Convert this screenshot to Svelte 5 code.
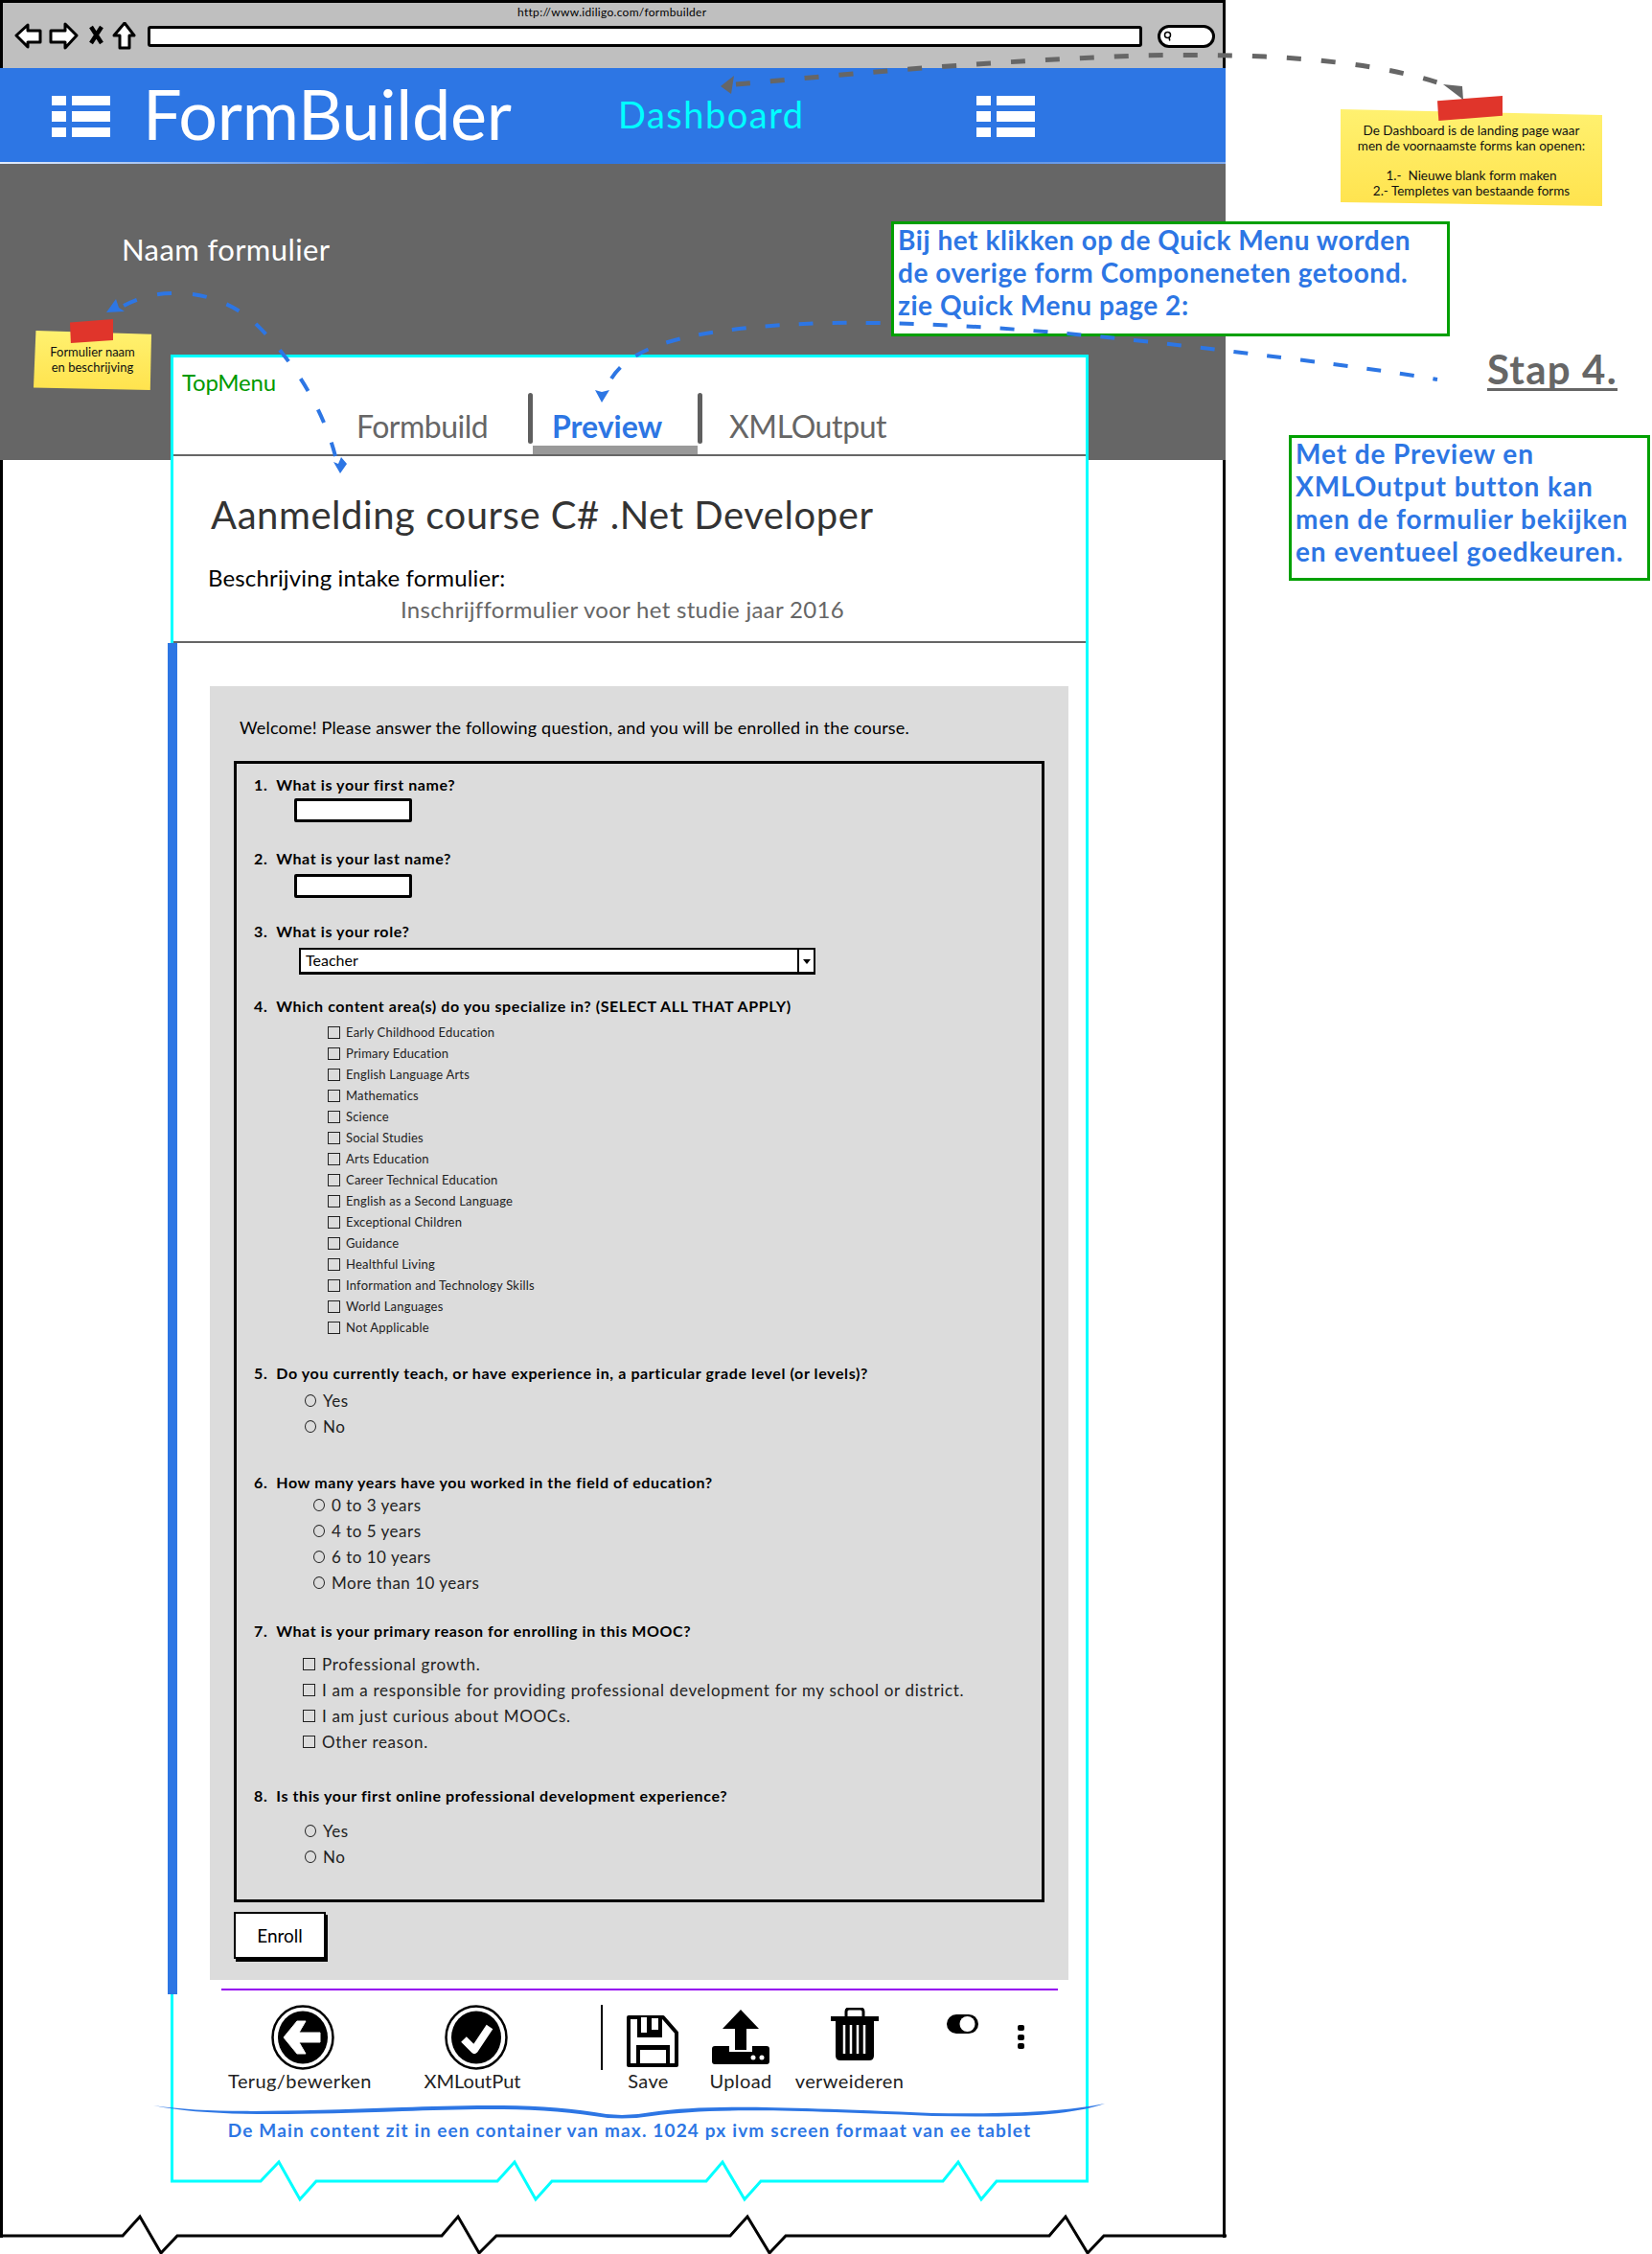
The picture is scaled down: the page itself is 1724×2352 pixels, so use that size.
<script>
  const areas = ['Early Childhood Education', 'Primary Education', 'English Language Arts', 'Mathematics', 'Science', 'Social Studies', 'Arts Education', 'Career Technical Education', 'English as a Second Language', 'Exceptional Children', 'Guidance', 'Healthful Living', 'Information and Technology Skills', 'World Languages', 'Not Applicable'];
  const yesNo = ['Yes', 'No'];
  const years = ['0 to 3 years', '4 to 5 years', '6 to 10 years', 'More than 10 years'];
  const reasons = ['Professional growth.', 'I am a responsible for providing professional development for my school or district.', 'I am just curious about MOOCs.', 'Other reason.'];
</script>

{#snippet listIcon()}
  <svg class="list-icon" viewBox="0 0 61 43" aria-hidden="true">
    <path d="M0 0h15v10H0zM21 0h40v10H21zM0 16h15v11H0zM21 16h40v11H21zM0 33h15v10H0zM21 33h40v10H21z" fill="#fff" />
  </svg>
{/snippet}

<div class="page">
  <div class="browser">
    <div class="toolbar">
      <div class="url">http://www.idiligo.com/formbuilder</div>
      <div class="navrow">
        <svg class="nav" viewBox="0 0 130 30" aria-hidden="true">
          <path d="M2 14 L14 3 V9 H27 V21 H14 V26 Z" fill="#fff" stroke="#000" stroke-width="3" stroke-linejoin="round" />
          <path d="M65 14 L53 2 V9 H38 V21 H53 V27 Z" fill="#fff" stroke="#000" stroke-width="3" stroke-linejoin="round" />
          <path d="M80 5 L91 22 M91 5 L80 22" stroke="#000" stroke-width="4.5" fill="none" />
          <path d="M115 1 L125 14 H120 V27 H110 V14 H104 Z" fill="#fff" stroke="#000" stroke-width="3" stroke-linejoin="round" />
        </svg>
        <div class="address"></div>
        <div class="search">
          <svg viewBox="0 0 12 16" aria-hidden="true"><circle cx="6" cy="6" r="4" fill="none" stroke="#000" stroke-width="2" /><path d="M8 9 L9 14" stroke="#000" stroke-width="2" /></svg>
        </div>
      </div>
    </div>

    <header class="topbar">
      {@render listIcon()}
      <div class="brand">FormBuilder</div>
      <div class="dash">Dashboard</div>
      {@render listIcon()}
    </header>

    <div class="banner">
      <div class="form-name">Naam formulier</div>
    </div>

    <div class="viewport">
      <main class="sheet">
        <section class="menu">
          <div class="topmenu">TopMenu</div>
          <div class="tabs">
            <div class="tab first">Formbuild</div>
            <div class="tab-div"></div>
            <div class="tab active">Preview</div>
            <div class="tab-div"></div>
            <div class="tab last">XMLOutput</div>
          </div>
        </section>

        <section class="intro">
          <h1>Aanmelding course C# .Net Developer</h1>
          <p class="desc">Beschrijving intake formulier:</p>
          <p class="sub">Inschrijfformulier voor het studie jaar 2016</p>
        </section>

        <section class="form-section">
          <div class="panel">
            <p class="welcome">Welcome! Please answer the following question, and you will be enrolled in the course.</p>
            <div class="form-box">
              <div class="q q1">1.&nbsp; What is your first name?</div>
              <div class="input i1"></div>
              <div class="q q2">2.&nbsp; What is your last name?</div>
              <div class="input i2"></div>
              <div class="q q3">3.&nbsp; What is your role?</div>
              <div class="select">
                <span class="sel-text">Teacher</span>
                <span class="sel-btn"></span>
              </div>
              <div class="q q4">4.&nbsp; Which content area(s) do you specialize in? (SELECT ALL THAT APPLY)</div>
              <ul class="areas">
                {#each areas as a}
                  <li><span class="box"></span>{a}</li>
                {/each}
              </ul>
              <div class="q q5">5.&nbsp; Do you currently teach, or have experience in, a particular grade level (or levels)?</div>
              <ul class="opts yes1">
                {#each yesNo as o}
                  <li><span class="radio"></span>{o}</li>
                {/each}
              </ul>
              <div class="q q6">6.&nbsp; How many years have you worked in the field of education?</div>
              <ul class="opts yrs">
                {#each years as o}
                  <li><span class="radio"></span>{o}</li>
                {/each}
              </ul>
              <div class="q q7">7.&nbsp; What is your primary reason for enrolling in this MOOC?</div>
              <ul class="opts why">
                {#each reasons as o}
                  <li><span class="box big"></span>{o}</li>
                {/each}
              </ul>
              <div class="q q8">8.&nbsp; Is this your first online professional development experience?</div>
              <ul class="opts yes2">
                {#each yesNo as o}
                  <li><span class="radio"></span>{o}</li>
                {/each}
              </ul>
            </div>
            <button class="enroll">Enroll</button>
          </div>
          <div class="purple"></div>
        </section>

        <section class="actions">
          <div class="act back">
            <svg class="round" viewBox="0 0 66 68" aria-hidden="true">
              <ellipse cx="33" cy="34" rx="31.5" ry="32.5" fill="#fff" stroke="#000" stroke-width="2.5" />
              <ellipse cx="33" cy="34" rx="26" ry="27.5" fill="#000" />
              <path d="M13 34 L27 17 H36 L29 29 H51 V39 H29 L36 51 H27 Z" fill="#fff" stroke="#fff" stroke-linejoin="round" />
            </svg>
            <span>Terug/bewerken</span>
          </div>
          <div class="act xml">
            <svg class="round" viewBox="0 0 66 68" aria-hidden="true">
              <ellipse cx="33" cy="34" rx="31.5" ry="32.5" fill="#fff" stroke="#000" stroke-width="2.5" />
              <ellipse cx="33" cy="34" rx="26" ry="27.5" fill="#000" />
              <path d="M20 36 L31 47 L47 23" fill="none" stroke="#fff" stroke-width="8" stroke-linejoin="round" />
            </svg>
            <span>XMLoutPut</span>
          </div>
          <div class="vline"></div>
          <div class="act save">
            <svg viewBox="0 0 54 54" aria-hidden="true">
              <path d="M2 2 H38 L52 18 V52 H2 Z" fill="#fff" stroke="#000" stroke-width="4" stroke-linejoin="round" />
              <path d="M11 2 H37 V23 H11 Z" fill="#000" />
              <path d="M15 2 H21 V18 H15 Z M26 3 H33 V15 H26 Z" fill="#fff" />
              <path d="M10 31 H45 V52 H10 Z" fill="#000" />
              <path d="M14 36 H41 V50 H14 Z" fill="#fff" />
            </svg>
            <span>Save</span>
          </div>
          <div class="act upload">
            <svg viewBox="0 0 60 58" aria-hidden="true">
              <path d="M30 1 L49 21 H36 V43 H24 V21 H11 Z" fill="#000" />
              <path d="M3 39 H18 V45 H42 V39 H57 Q60 39 60 42 V55 Q60 58 57 58 H3 Q0 58 0 55 V42 Q0 39 3 39 Z" fill="#000" />
              <circle cx="43" cy="51" r="2.5" fill="#fff" />
              <circle cx="52" cy="51" r="2.5" fill="#fff" />
            </svg>
            <span>Upload</span>
          </div>
          <div class="act trash">
            <svg viewBox="0 0 50 56" aria-hidden="true">
              <path d="M16 9 V4 Q16 1 19 1 H31 Q34 1 34 4 V9" fill="none" stroke="#000" stroke-width="3" />
              <path d="M0 9 H50 V14 H0 Z" fill="#000" />
              <path d="M5 14 H45 V50 Q45 55 40 55 H10 Q5 55 5 50 Z" fill="#000" />
              <path d="M14 18 V48 M21 18 V48 M28 18 V48 M35 18 V48" stroke="#fff" stroke-width="2.5" />
            </svg>
            <span>verweideren</span>
          </div>
          <svg class="toggle" viewBox="0 0 33 20" aria-hidden="true">
            <rect width="33" height="20" rx="10" fill="#000" />
            <circle cx="21.5" cy="10" r="8" fill="#fff" />
          </svg>
          <svg class="dots" viewBox="0 0 7 25" aria-hidden="true">
            <rect width="7" height="6" rx="2" fill="#000" />
            <rect y="10" width="7" height="6" rx="2" fill="#000" />
            <rect y="19" width="7" height="6" rx="2" fill="#000" />
          </svg>
        </section>

        <p class="main-note">De Main content zit in een container van max. 1024 px ivm screen formaat van ee tablet</p>
      </main>
    </div>
  </div>

  <aside class="note note-left">
    <div class="paper"><p>Formulier naam</p><p>en beschrijving</p></div>
    <div class="tape"></div>
  </aside>
  <aside class="note note-right">
    <div class="paper">
      <p>De Dashboard is de landing page waar</p>
      <p>men de voornaamste forms kan openen:</p>
      <p class="gap">1.- &nbsp;Nieuwe blank form maken</p>
      <p>2.- Templetes van bestaande forms</p>
    </div>
    <div class="tape"></div>
  </aside>

  <aside class="callout one">
    <p>Bij het klikken op de Quick Menu worden</p>
    <p>de overige form Componeneten getoond.</p>
    <p>zie Quick Menu page 2:</p>
  </aside>
  <div class="stap">Stap 4.</div>
  <aside class="callout two">
    <p>Met de Preview en</p>
    <p>XMLOutput button kan</p>
    <p>men de formulier bekijken</p>
    <p>en eventueel goedkeuren.</p>
  </aside>

  <svg class="overlay" viewBox="0 0 1724 2352" aria-hidden="true">
    <!-- torn edges -->
    <path d="M178 2276 H272 L291 2256 L313 2295 L330 2276 H519 L537 2256 L559 2295 L576 2276 H737 L754 2256 L777 2295 L794 2276 H984 L1000 2256 L1024 2295 L1040 2276 H1136" fill="none" stroke="#00ffff" stroke-width="3" />
    <path d="M0 2333 H128 L146 2313 L168 2351 L185 2333 H461 L478 2313 L500 2351 L518 2333 H762 L780 2313 L803 2351 L820 2333 H1095 L1112 2313 L1135 2351 L1152 2333 H1280" fill="none" stroke="#000" stroke-width="3" />

    <!-- blue swoosh under actions -->
    <path d="M160 2197 C220 2206 300 2203 420 2199 C480 2197 560 2194 620 2204 Q648 2210 680 2204 C740 2196 800 2198 973 2205 C1050 2206 1110 2204 1153 2195 C1110 2210 1040 2209 973 2208 C800 2201 740 2200 680 2208 Q648 2213 620 2208 C560 2198 480 2201 420 2203 C300 2207 220 2209 160 2197 Z" fill="#2d76e4" />

    <!-- grey arrow to dashboard note -->
    <path d="M768 88 C860 80 1000 65 1190 58 C1290 56 1410 58 1500 86" fill="none" stroke="#666" stroke-width="5" stroke-dasharray="15 21" />
    <path d="M752 90 L766 79 L763 98 Z" fill="#666" />
    <path d="M1506 88 L1526 90 L1527 104 Z" fill="#666" />

    <!-- blue arrow form name -->
    <path d="M350 476 C338 430 310 380 266 337 C240 314 210 305 180 306 C160 306 140 312 124 322" fill="none" stroke="#2d76e4" stroke-width="4" stroke-dasharray="15 22" />
    <path d="M111 326 L121 312 L124 321 L130 325 Z" fill="#2d76e4" />
    <path d="M355 494 L348 482 L353 484 L356 477 L362 484 Z" fill="#2d76e4" />

    <!-- blue arrow quick menu -->
    <path d="M638 395 C660 360 720 342 860 337 C1000 335 1150 350 1279 366 C1360 376 1430 384 1500 396" fill="none" stroke="#2d76e4" stroke-width="4" stroke-dasharray="15 20" />
    <path d="M628 420 L621 407 L628 409 L636 407 Z" fill="#2d76e4" />
  </svg>
</div>

<style>
  :global(body) {
    margin: 0;
    background: #fff;
    font-family: Lato, "Noto Sans", sans-serif;
    color: #000;
  }
  p, h1, ul {
    margin: 0;
    padding: 0;
  }
  ul {
    list-style: none;
  }
  .page {
    position: relative;
    width: 1724px;
    height: 2352px;
    overflow: hidden;
    background: #fff;
  }
  .browser {
    width: 1279px;
  }

  .toolbar {
    box-sizing: border-box;
    height: 71px;
    background: #bfbfbf;
    border: 3px solid #000;
    border-bottom: 0;
  }
  .url {
    padding: 2px 0 0 537px;
    height: 16px;
    font-size: 12px;
    line-height: 16px;
    letter-spacing: 0.3px;
  }
  .navrow {
    display: flex;
    align-items: center;
    margin-top: 2px;
  }
  .nav {
    width: 130px;
    height: 30px;
    margin-left: 12px;
  }
  .address {
    box-sizing: border-box;
    width: 1038px;
    height: 22px;
    margin-left: 9px;
    background: #fff;
    border: 3px solid #000;
    border-radius: 3px;
  }
  .search {
    box-sizing: border-box;
    width: 60px;
    height: 24px;
    margin-left: 16px;
    padding-left: 3px;
    background: #fff;
    border: 3px solid #000;
    border-radius: 12px;
    line-height: 0;
  }
  .search svg {
    width: 9px;
    height: 14px;
    margin-top: 2px;
  }

  .topbar {
    display: flex;
    align-items: center;
    box-sizing: border-box;
    height: 100px;
    padding-left: 54px;
    background: #2d76e4;
    border-bottom: 2px solid;
    border-image: linear-gradient(90deg, #e4ecfa, #7fa9ec 20%, #2d76e4 35%, #2d76e4 50%, #7fa9ec 100%) 1;
  }
  .list-icon {
    flex: none;
    width: 61px;
    height: 43px;
    margin-top: 2px;
  }
  .brand {
    flex: none;
    width: 496px;
    margin: -5px 0 0 34px;
    color: #fff;
    font-size: 72px;
    line-height: 80px;
    letter-spacing: -0.3px;
  }
  .dash {
    flex: none;
    width: 374px;
    margin-top: -2px;
    color: #00ffff;
    font-size: 38px;
    line-height: 44px;
    letter-spacing: 1.5px;
  }

  .banner {
    box-sizing: border-box;
    height: 309px;
    padding: 69px 0 0 127px;
    background: #666;
  }
  .form-name {
    color: #fff;
    font-size: 31px;
    line-height: 40px;
    letter-spacing: 0.4px;
  }

  .viewport {
    display: flow-root;
    box-sizing: border-box;
    height: 1855px;
    border-left: 3px solid #000;
    border-right: 3px solid #000;
  }
  .sheet {
    box-sizing: border-box;
    width: 958px;
    height: 1906px;
    margin: -110px 0 0 175px;
    background: #fff;
    border: 3px solid #00ffff;
    border-bottom: 0;
  }

  .menu {
    box-sizing: border-box;
    height: 103px;
    padding-top: 11px;
    border-bottom: 2px solid #666;
  }
  .topmenu {
    padding-left: 9px;
    color: #009900;
    font-size: 24px;
    line-height: 30px;
    letter-spacing: -0.2px;
  }
  .tabs {
    display: flex;
    margin-top: -4px;
  }
  .tab {
    box-sizing: border-box;
    height: 64px;
    padding-top: 15px;
    color: #666;
    font-size: 32px;
    line-height: 40px;
  }
  .tab.first {
    width: 179px;
    margin-left: 191px;
    letter-spacing: -0.5px;
  }
  .tab.active {
    width: 172px;
    padding-left: 20px;
    color: #2d76e4;
    font-weight: 700;
    border-bottom: 9px solid #999;
  }
  .tab.last {
    margin-left: 28px;
    letter-spacing: -0.4px;
  }
  .tab-div {
    flex: none;
    width: 5px;
    height: 53px;
    background: #5f5f5f;
    border-radius: 3px;
  }

  .intro {
    box-sizing: border-box;
    height: 195px;
    padding-top: 36px;
    border-bottom: 2px solid #666;
  }
  h1 {
    margin-left: 39px;
    color: #333;
    font-size: 40px;
    font-weight: 400;
    line-height: 50px;
    letter-spacing: 0.55px;
  }
  .desc {
    margin: 26px 0 0 36px;
    font-size: 24px;
    line-height: 30px;
    letter-spacing: 0.15px;
  }
  .sub {
    margin: 3px 0 0 237px;
    color: #666;
    font-size: 24px;
    line-height: 30px;
    letter-spacing: 0.3px;
  }

  .form-section {
    box-sizing: border-box;
    height: 1410px;
    margin-left: -6px;
    padding-top: 45px;
    border-left: 10px solid #2d76e4;
  }
  .panel {
    box-sizing: border-box;
    width: 896px;
    height: 1350px;
    margin-left: 34px;
    padding-top: 32px;
    background: #dcdcdc;
  }
  .welcome {
    padding-left: 31px;
    font-size: 18px;
    line-height: 22px;
    letter-spacing: 0.19px;
  }
  .form-box {
    box-sizing: border-box;
    width: 846px;
    height: 1191px;
    margin: 24px 0 0 25px;
    padding: 10px 0 0 18px;
    border: 3px solid #000;
  }
  .q {
    font-size: 16px;
    font-weight: 700;
    line-height: 24px;
    letter-spacing: 0.6px;
  }
  .q2 { margin-top: 26px; }
  .q3 { margin-top: 23px; }
  .q4 { margin-top: 21px; }
  .q5 { margin-top: 25px; }
  .q6 { margin-top: 33px; }
  .q7 { margin-top: 25px; }
  .q8 { margin-top: 31px; }
  .input {
    box-sizing: border-box;
    width: 123px;
    height: 25px;
    margin-left: 42px;
    background: #fff;
    border: 3px solid #000;
    border-radius: 2px;
  }
  .i1 { margin-top: 2px; }
  .i2 { margin-top: 4px; }
  .select {
    display: flex;
    box-sizing: border-box;
    width: 539px;
    height: 28px;
    margin: 5px 0 0 47px;
    background: #fff;
    border: 2px solid #000;
    border-bottom-width: 3px;
  }
  .sel-text {
    flex: 1;
    padding-left: 5px;
    font-size: 16px;
    line-height: 22px;
  }
  .sel-btn {
    position: relative;
    width: 15px;
    border-left: 2px solid #000;
  }
  .sel-btn::after {
    content: "";
    position: absolute;
    left: 4px;
    top: 10px;
    border: 4px solid transparent;
    border-top: 5px solid #000;
    border-bottom: 0;
  }
  .areas {
    margin: 4px 0 0 77px;
  }
  .areas li {
    display: flex;
    align-items: center;
    height: 22px;
    color: #222;
    font-size: 13px;
    letter-spacing: 0.2px;
  }
  .box {
    flex: none;
    box-sizing: border-box;
    width: 13px;
    height: 13px;
    margin-right: 6px;
    border: 1.5px solid #222;
  }
  .box.big {
    margin-right: 7px;
  }
  .opts li {
    display: flex;
    align-items: center;
    height: 27px;
    color: #222;
    font-size: 17px;
    letter-spacing: 0.5px;
  }
  .radio {
    flex: none;
    box-sizing: border-box;
    width: 12px;
    height: 13px;
    margin-right: 7px;
    border: 1.5px solid #222;
    border-radius: 50%;
  }
  .yes1 { margin: 3px 0 0 53px; }
  .yrs { margin: -2px 0 0 62px; }
  .why { margin: 9px 0 0 51px; }
  .why li { letter-spacing: 0.68px; }
  .yes2 { margin: 11px 0 0 53px; }

  .enroll {
    display: block;
    box-sizing: border-box;
    width: 96px;
    height: 49px;
    margin: 10px 0 0 25px;
    padding: 0;
    background: #fff;
    border: 2px solid #000;
    box-shadow: 2px 3px 0 #000;
    color: #000;
    font-family: inherit;
    font-size: 19px;
  }
  .purple {
    width: 873px;
    height: 2px;
    margin: 9px 0 0 46px;
    background: #9400f0;
  }

  .actions {
    display: flex;
    align-items: flex-start;
    height: 93px;
    margin-top: 11px;
  }
  .act {
    display: flex;
    flex: none;
    flex-direction: column;
    align-items: center;
    color: #222;
    font-size: 20px;
    line-height: 26px;
    letter-spacing: 0.4px;
    white-space: nowrap;
  }
  .act svg {
    display: block;
  }
  .round {
    width: 66px;
    height: 68px;
    margin-bottom: -2px;
  }
  .back { width: 150px; margin-left: 57px; }
  .back svg { margin-left: 6px; }
  .xml { width: 150px; margin-left: 30px; letter-spacing: 0; }
  .xml svg { margin-left: 8px; }
  .vline {
    flex: none;
    width: 2px;
    height: 68px;
    margin-left: 59px;
    background: #000;
  }
  .save { width: 60px; margin-left: 22px; }
  .save svg { width: 54px; height: 54px; margin: 11px 0 1px; }
  .save span { margin-right: 9px; }
  .upload { width: 70px; margin-left: 27px; }
  .upload svg { width: 60px; height: 58px; margin: 4px 0 4px; }
  .trash { width: 115px; margin-left: 21px; }
  .trash svg { width: 50px; height: 56px; margin: 3px 0 7px 10px; }
  .toggle {
    flex: none;
    width: 33px;
    height: 20px;
    margin: 10px 0 0 44px;
  }
  .dots {
    flex: none;
    width: 7px;
    height: 25px;
    margin: 21px 0 0 41px;
  }
  .main-note {
    margin-top: 25px;
    color: #2d76e4;
    font-size: 19px;
    font-weight: 700;
    line-height: 26px;
    text-align: center;
    letter-spacing: 1.15px;
  }

  .note {
    position: absolute;
  }
  .paper {
    box-sizing: border-box;
    height: 100%;
    background: linear-gradient(180deg, #fff170 0%, #ffe34e 100%);
    text-align: center;
    font-size: 13px;
    line-height: 16px;
    color: #111;
  }
  .tape {
    position: absolute;
    background: #e0352b;
  }
  .note-left {
    left: 35px;
    top: 345px;
    width: 123px;
    height: 62px;
  }
  .note-left .paper {
    padding-top: 14px;
    clip-path: polygon(2% 0, 100% 6%, 99% 100%, 0 96%);
  }
  .note-left .tape {
    left: 38px;
    top: -12px;
    width: 45px;
    height: 25px;
    clip-path: polygon(0 14%, 100% 0, 100% 88%, 2% 100%);
  }
  .note-right {
    left: 1399px;
    top: 114px;
    width: 273px;
    height: 101px;
  }
  .note-right .paper {
    padding-top: 14px;
    clip-path: polygon(0 0, 100% 6%, 100% 100%, 0 96%);
    font-size: 13.5px;
  }
  .note-right .gap {
    margin-top: 15px;
  }
  .note-right .tape {
    left: 101px;
    top: -14px;
    width: 68px;
    height: 26px;
    clip-path: polygon(0 20%, 100% 0, 100% 80%, 2% 100%);
  }

  .callout {
    position: absolute;
    box-sizing: border-box;
    background: #fff;
    border: 3px solid #00a000;
    color: #2d76e4;
    font-size: 28px;
    font-weight: 700;
    line-height: 34px;
  }
  .callout p {
    position: relative;
    top: -1px;
  }
  .callout.one {
    left: 930px;
    top: 231px;
    width: 583px;
    height: 120px;
    padding-left: 4px;
    letter-spacing: 0.55px;
  }
  .callout.two {
    left: 1345px;
    top: 454px;
    width: 377px;
    height: 152px;
    padding: 0 0 0 4px;
    letter-spacing: 0.9px;
  }
  .stap {
    position: absolute;
    left: 1552px;
    top: 365px;
    color: #666;
    font-size: 42px;
    font-weight: 700;
    line-height: 40px;
    letter-spacing: 1.2px;
    border-bottom: 3px solid #666;
  }

  .overlay {
    position: absolute;
    left: 0;
    top: 0;
    width: 1724px;
    height: 2352px;
    pointer-events: none;
  }
</style>
